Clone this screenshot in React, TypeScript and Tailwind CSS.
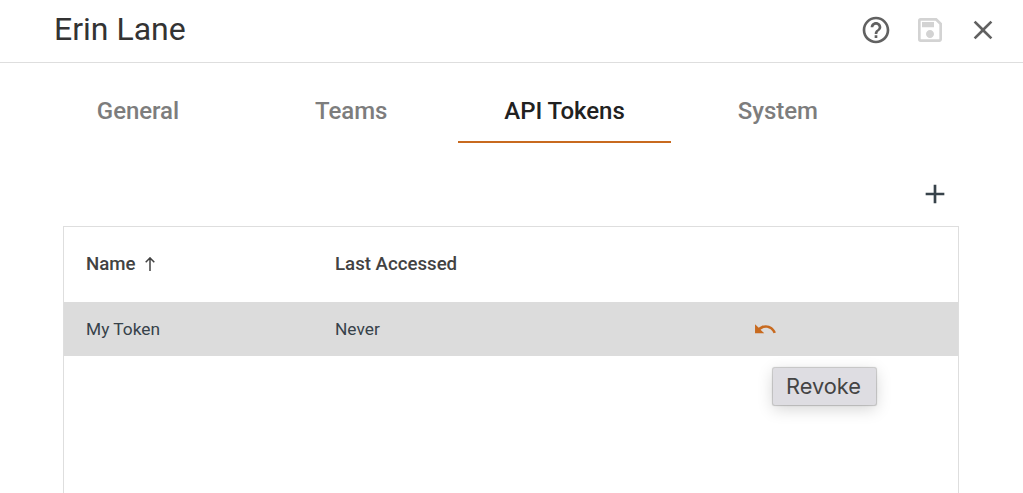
import type { ReactNode } from "react";
import { MdAdd, MdClose, MdHelpOutline, MdOutlineSave, MdUndo } from "react-icons/md";

function Tab({ children, active = false }: { children: ReactNode; active?: boolean }) {
  return (
    <button
      role="tab"
      aria-selected={active}
      className={
        "flex h-20 w-[213.3px] items-center justify-center border-b-2 pt-[18px] text-[24px] font-medium tracking-[-0.05px] " +
        (active ? "border-[#c86a1f] text-[#212121]" : "border-transparent text-[#7d7d7d]")
      }
    >
      {children}
    </button>
  );
}

export default function App() {
  return (
    <div className="flex h-[493px] w-[1023px] flex-col overflow-hidden bg-white font-['Roboto',sans-serif]">
      <header className="flex h-[63px] shrink-0 items-center justify-between border-b border-[#dedede] pl-[54px] pr-6">
        <h1 className="mb-1 text-[32px] leading-[40px] text-[#333333]">Erin Lane</h1>
        <div className="mb-[2px] flex items-center text-[32px] text-[#616161]">
          <MdHelpOutline />
          <MdOutlineSave className="ml-[22px] text-[#d3d3d3]" />
          <MdClose className="ml-[21px]" />
        </div>
      </header>

      <nav role="tablist" className="flex shrink-0 pl-[31.3px]">
        <Tab>General</Tab>
        <Tab>Teams</Tab>
        <Tab active>API Tokens</Tab>
        <Tab>System</Tab>
      </nav>

      <main className="flex flex-1 flex-col px-[63px]">
        <div className="flex h-[83px] shrink-0 justify-end pr-[9px] pt-[35px]">
          <MdAdd className="text-[32px] text-[#37424a]" />
        </div>
        <section className="w-[896px] flex-1 border border-b-0 border-[#dedede]">
          <div className="flex h-[75px] items-center pb-[2px] pl-[22px] text-[18.67px] font-medium text-[#424242]">
            <div className="flex w-[249px] items-center">
              Name
              <svg className="ml-[9px] mt-px" width="10" height="14" viewBox="0 0 10 14" fill="none" stroke="currentColor" strokeWidth="1.5">
                <path d="M5 14V1M.7 5.2 5 .9l4.3 4.3" />
              </svg>
            </div>
            <div>Last Accessed</div>
          </div>
          <div className="flex h-[54px] items-center bg-[#dcdcdc] pl-[22px] text-[17.33px] text-[#37424a]">
            <div className="mt-px w-[249px]">My Token</div>
            <div className="mt-px w-[418px]">Never</div>
            <div className="relative">
              <MdUndo className="text-[24.5px] text-[#c86a1f]" />
              <div
                role="tooltip"
                className="absolute left-[20px] top-[51px] flex h-[37px] w-[103px] items-center justify-center rounded-[2px] bg-[#dedde2] pr-[2px] pt-px font-['Inter',sans-serif] text-[21.8px] text-[#444444] shadow-[0_0_1px_0.5px_rgba(0,0,0,0.2),0_4px_16px_rgba(0,0,0,0.17)]"
              >
                Revoke
              </div>
            </div>
          </div>
        </section>
      </main>
    </div>
  );
}
